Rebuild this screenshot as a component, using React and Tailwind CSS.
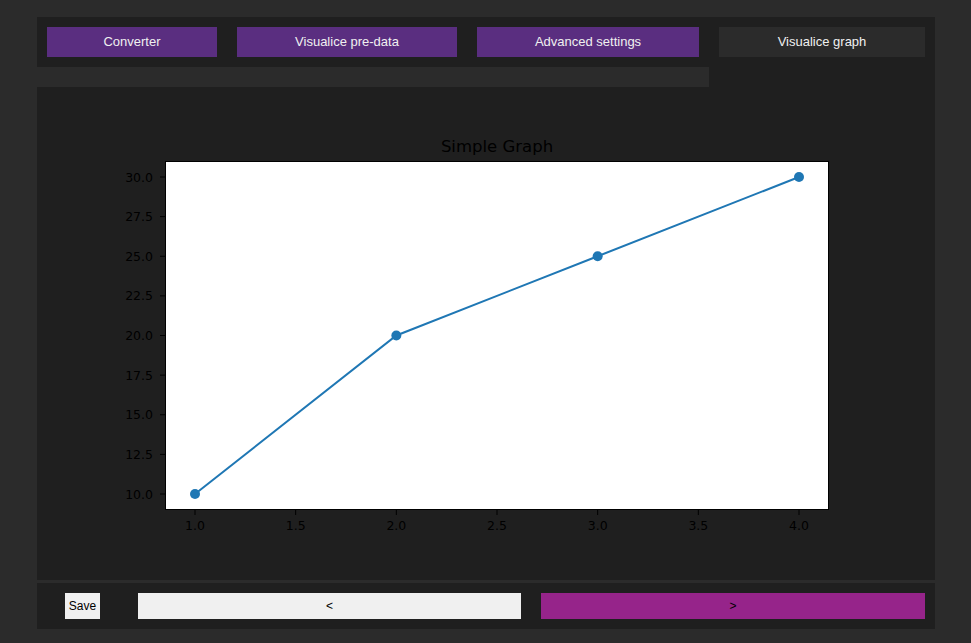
import React from "react";

const X = (v) => 195 + (v - 1) * 201.33;
const Y = (v) => 494 - (v - 10) * 15.85;

const pts = [
  [1, 10],
  [2, 20],
  [3, 25],
  [4, 30],
];
const yTicks = [10, 12.5, 15, 17.5, 20, 22.5, 25, 27.5, 30];
const xTicks = [1, 1.5, 2, 2.5, 3, 3.5, 4];

function Chart() {
  return (
    <svg
      width="898"
      height="493"
      viewBox="37 87 898 493"
      className="block"
      style={{ fontFamily: '"DejaVu Sans", sans-serif' }}
    >
      <text x="497" y="152" textAnchor="middle" fontSize="16.5" fill="#000">
        Simple Graph
      </text>
      <rect x="165.5" y="161.5" width="663" height="348" fill="#fff" stroke="#000" strokeWidth="1" />
      {yTicks.map((t) => (
        <g key={"y" + t}>
          <line x1="160" x2="165" y1={Y(t)} y2={Y(t)} stroke="#000" strokeWidth="1" />
          <text x="153" y={Y(t) + 4.5} textAnchor="end" fontSize="12.5" fill="#000">
            {t.toFixed(1)}
          </text>
        </g>
      ))}
      {xTicks.map((t) => (
        <g key={"x" + t}>
          <line x1={X(t)} x2={X(t)} y1="510" y2="515" stroke="#000" strokeWidth="1" />
          <text x={X(t)} y="530" textAnchor="middle" fontSize="12.5" fill="#000">
            {t.toFixed(1)}
          </text>
        </g>
      ))}
      <polyline
        points={pts.map(([a, b]) => `${X(a)},${Y(b)}`).join(" ")}
        fill="none"
        stroke="#1f77b4"
        strokeWidth="2"
      />
      {pts.map(([a, b]) => (
        <circle key={a} cx={X(a)} cy={Y(b)} r="5" fill="#1f77b4" />
      ))}
    </svg>
  );
}

export default function App() {
  const font = { fontFamily: '"Liberation Sans", Arial, sans-serif' };
  return (
    <div className="w-[971px] h-[643px] bg-[#2b2b2b] pt-[17px] pl-[37px] overflow-hidden" style={font}>
      <div className="w-[898px] flex flex-col">
        <div className="h-[50px] bg-[#1f1f1f] flex items-center px-[10px] gap-[20px] text-[13px] text-[#f0f0f0]">
          <div className="w-[170px] h-[30px] bg-[#5a2e80] flex items-center justify-center">Converter</div>
          <div className="w-[220px] h-[30px] bg-[#5a2e80] flex items-center justify-center">Visualice pre-data</div>
          <div className="w-[222px] h-[30px] bg-[#5a2e80] flex items-center justify-center">Advanced settings</div>
          <div className="w-[206px] h-[30px] bg-[#2b2b2b] flex items-center justify-center">Visualice graph</div>
        </div>
        <div className="h-[20px] flex">
          <div className="w-[672px] bg-[#2b2b2b]" />
          <div className="flex-1 bg-[#1f1f1f]" />
        </div>
        <div className="h-[493px] bg-[#1f1f1f]">
          <Chart />
        </div>
        <div className="h-[3px] bg-[#2b2b2b]" />
        <div className="h-[46px] bg-[#1f1f1f] flex items-start pt-[10px] pl-[28px] pr-[10px] text-[12px] text-black">
          <div className="w-[35px] h-[26px] bg-[#f0f0f0] flex items-center justify-center">Save</div>
          <div className="w-[383px] h-[26px] bg-[#f0f0f0] ml-[38px] flex items-center justify-center">&lt;</div>
          <div className="w-[384px] h-[26px] bg-[#96248a] ml-[20px] flex items-center justify-center">&gt;</div>
        </div>
      </div>
    </div>
  );
}
